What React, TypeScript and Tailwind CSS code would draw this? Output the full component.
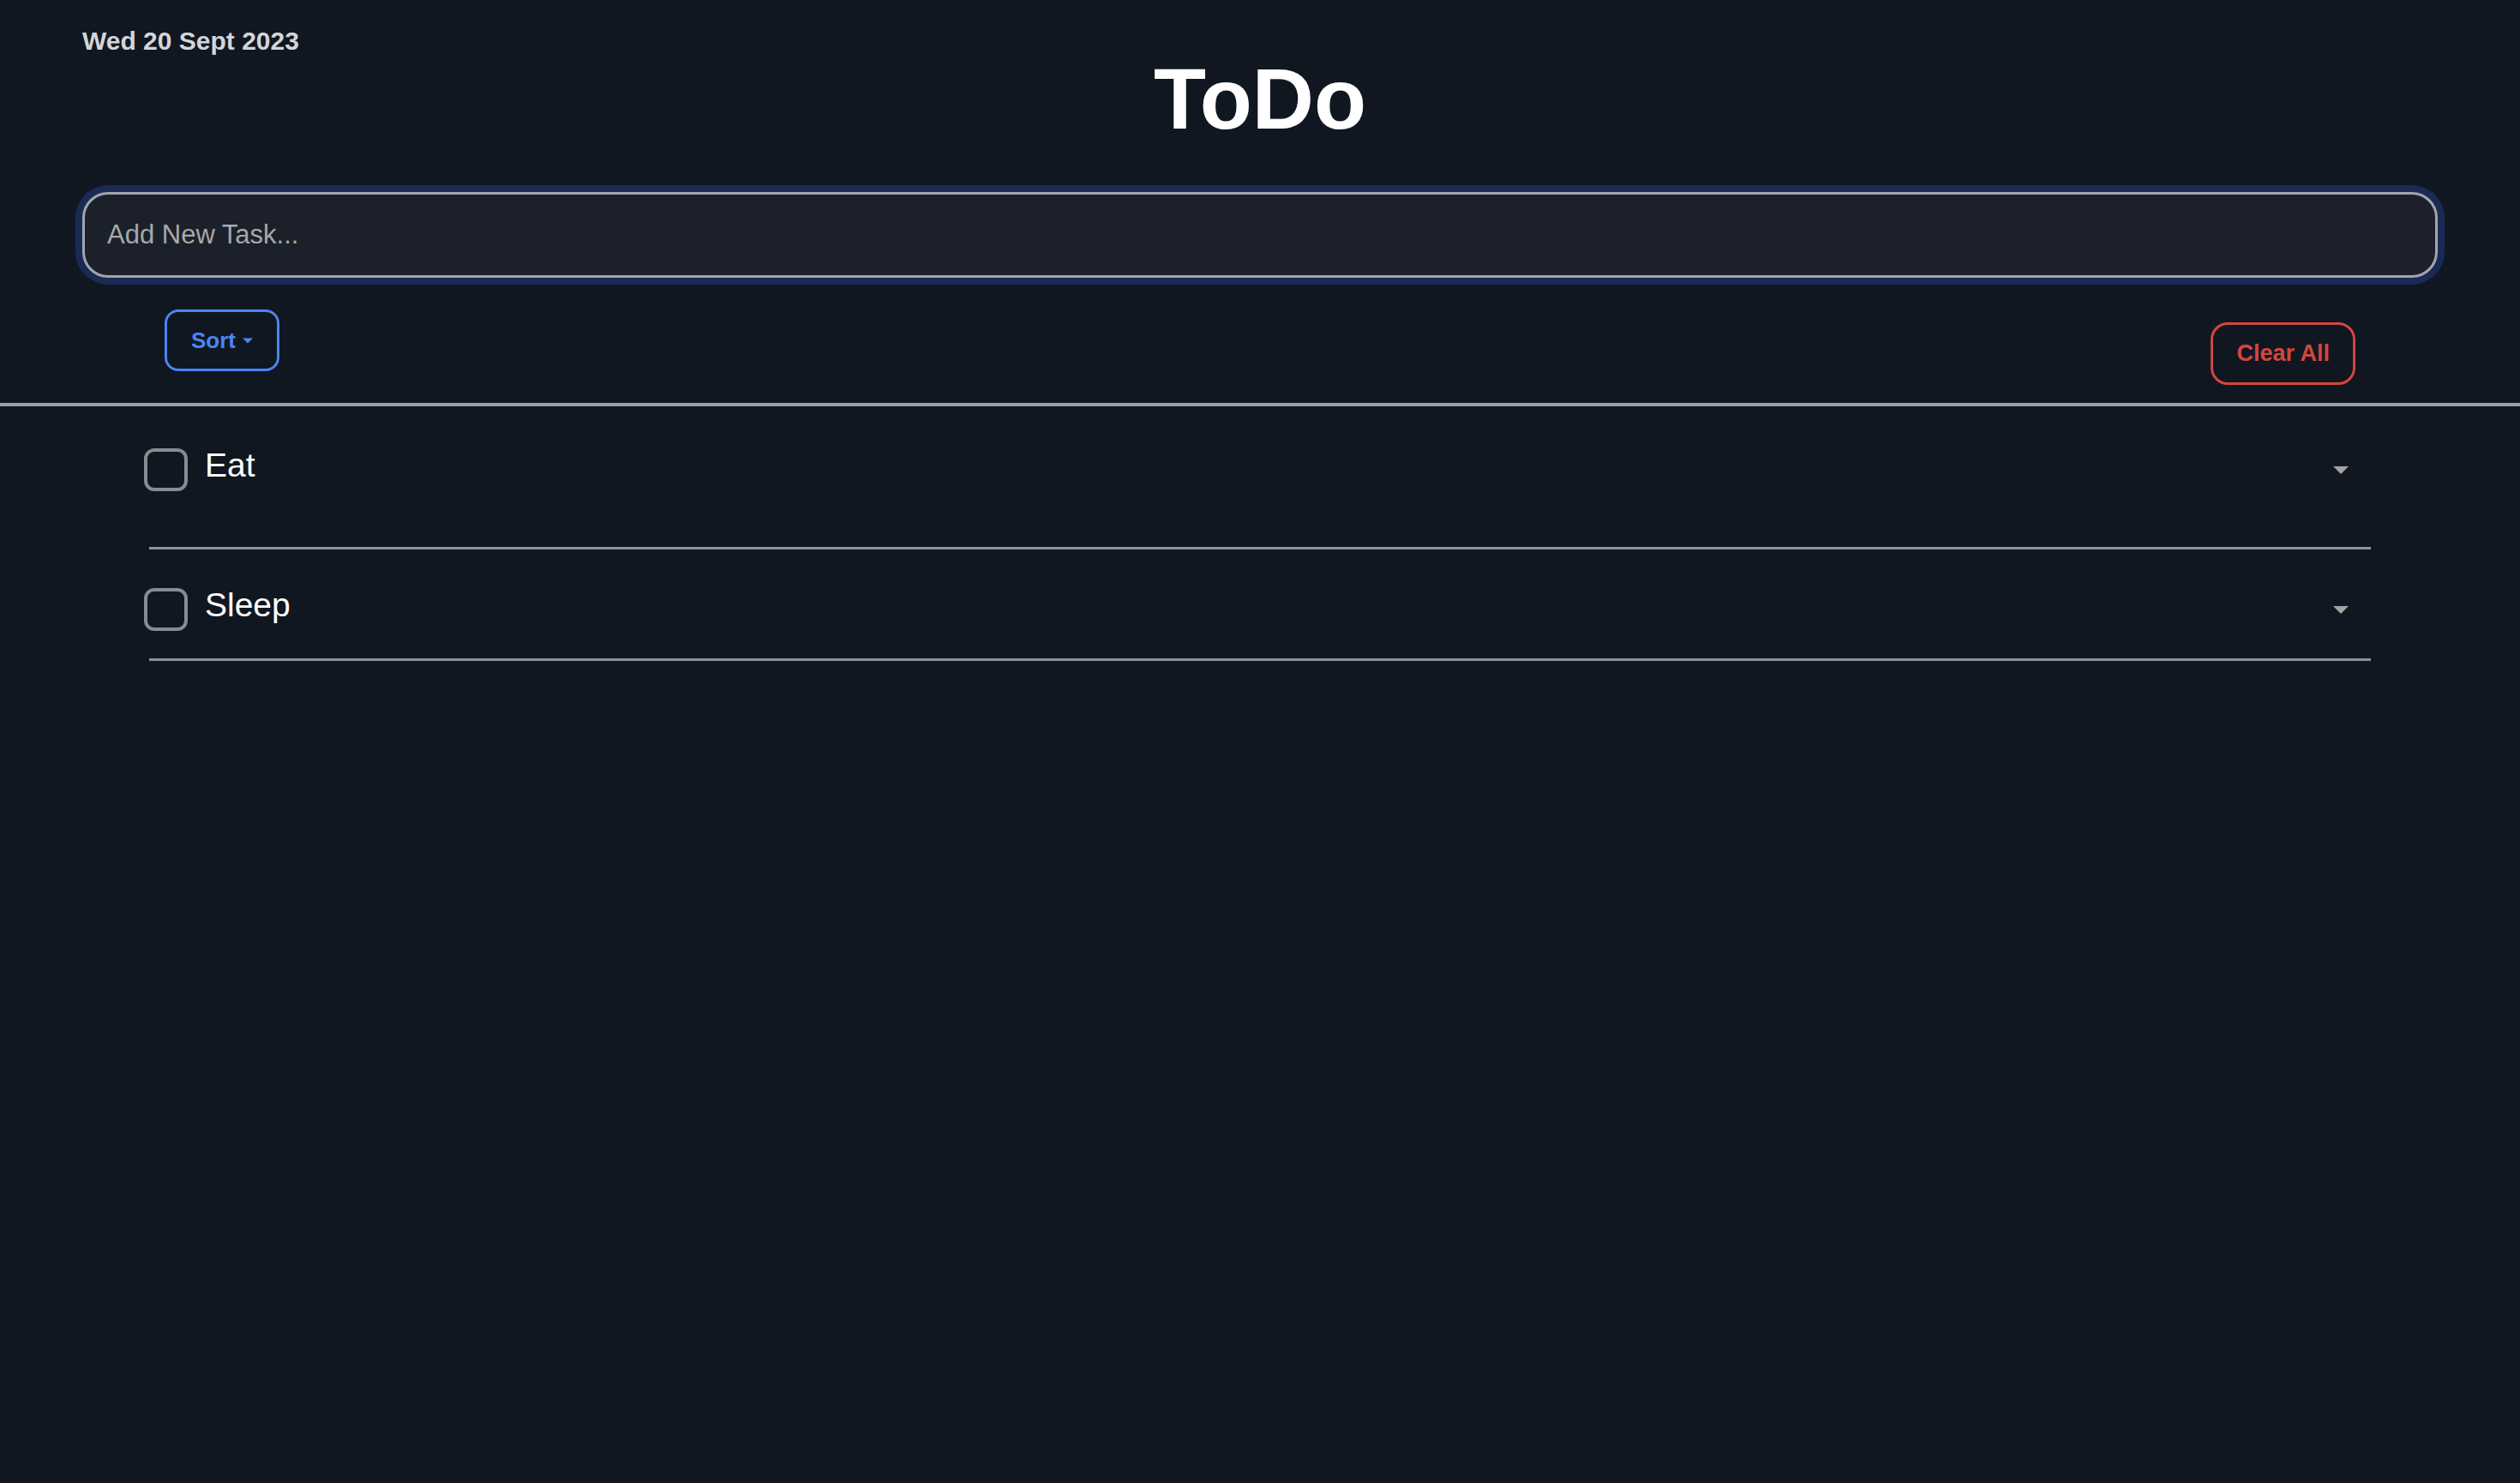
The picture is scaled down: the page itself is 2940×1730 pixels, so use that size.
import { useState } from "react";

type Task = { id: number; title: string; done: boolean };

const TASKS: Task[] = [
  { id: 1, title: "Eat", done: false },
  { id: 2, title: "Sleep", done: false },
];

function Caret({ className }: { className: string }) {
  return (
    <svg className={className} viewBox="0 0 18 9" fill="currentColor">
      <path d="M0 0h18L9 9z" />
    </svg>
  );
}

function TaskRow({ task, first }: { task: Task; first: boolean }) {
  return (
    <div
      className={`border-b-[3px] border-[#8e9196] ${first ? "pt-[49px] pb-[65px]" : "pt-[45px] pb-[32px]"}`}
    >
      <div className="flex items-start -ml-[6px] mr-[26px]">
        <div className="w-[51px] h-[50px] shrink-0 rounded-[12px] border-[4px] border-[#888b91]" />
        <span className="ml-[20px] text-[39px] leading-none text-white">{task.title}</span>
        <Caret className="ml-auto mt-[21px] w-[18px] h-[9px] text-[#a3a3a3]" />
      </div>
    </div>
  );
}

export default function App() {
  const [tasks] = useState(TASKS);

  return (
    <div className="min-h-screen bg-[#111721] font-['Liberation_Sans',Arial,sans-serif]">
      <div className="grid grid-cols-[1fr_auto_1fr] pt-[33px] px-[96px]">
        <p className="text-[30px] leading-none font-bold text-[#d4d5d8]">Wed 20 Sept 2023</p>
        <h1 className="mt-[32px] text-[100px] leading-none font-bold text-white">ToDo</h1>
        <div />
      </div>

      <div className="px-[96px] mt-[59px]">
        <div className="h-[100px] rounded-[30px] border-[3px] border-[#a1a5ac] bg-[#1b202a] ring-8 ring-[#192b55] flex items-center pl-[26px]">
          <span className="text-[31px] text-[#a7a8ab]">Add New Task...</span>
        </div>
      </div>

      <div className="flex justify-between px-[192px] h-[146px]">
        <button className="mt-[37px] h-[72px] flex items-center px-[28px] rounded-[16px] border-[3px] border-[#4a86f0] text-[#4a86f0] text-[26px] font-bold leading-none">
          Sort
          <Caret className="ml-[8px] w-[12px] h-[7px]" />
        </button>
        <button className="mt-[52px] h-[73px] px-[27px] rounded-[20px] border-[3px] border-[#d4463f] text-[#d4463f] text-[27px] font-bold leading-none">
          Clear All
        </button>
      </div>

      <div className="h-[4px] bg-[#9b9ea3]" />

      <div className="mx-[174px]">
        {tasks.map((t, i) => (
          <TaskRow key={t.id} task={t} first={i === 0} />
        ))}
      </div>
    </div>
  );
}
